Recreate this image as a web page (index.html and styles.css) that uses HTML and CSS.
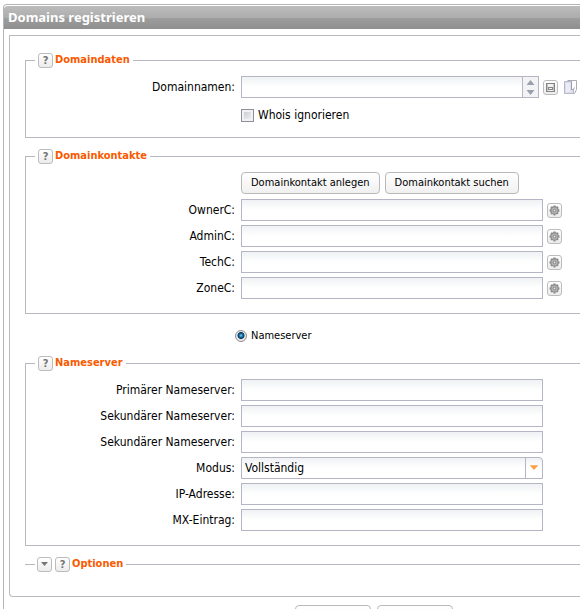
FILE: index.html
```html
<!DOCTYPE html>
<html lang="de">
<head>
<meta charset="utf-8">
<title>Domains registrieren</title>
<link rel="stylesheet" href="styles.css">
</head>
<body>
<svg class="defs" aria-hidden="true">
  <symbol id="gear" viewBox="0 0 10 10">
    <path d="M4 .5h2l.3 1 1.500-.4 1 1.400-.5 1.100 1.200.6v1.600l-1.200.5.4 1.300-1.300 1.100-1.200-.5L5.800 9.500H4.200l-.5-1.300-1.300.5L1.200 7.500l.5-1.200-1.200-.5V4.200l1.200-.5-.5-1.300 1.200-1.200 1.300.5z" fill="#8c8c8c"/>
    <circle cx="5" cy="5" r="2.8" fill="#b4b4b4"/>
    <circle cx="5" cy="5" r="1.6" fill="#858585"/>
    <circle cx="5" cy="5" r="0.9" fill="#e2e2e2"/>
  </symbol>
</svg>
<form class="window">
  <h1 class="title">Domains registrieren</h1>
  <div class="panel">
    <fieldset class="group data">
      <legend><button type="button" class="icon help">?</button><span>Domaindaten</span></legend>
      <div class="row">
        <label for="names">Domainnamen:</label>
        <div class="names">
          <textarea id="names" rows="1"></textarea>
          <span class="spin"><svg width="15" height="20" viewBox="0 0 15 20"><path d="M7.500 3l4 5h-8zM7.500 18l4-5h-8z" fill="#9ba1ac"/></svg></span>
        </div>
        <button type="button" class="icon" aria-label="Speichern"><svg width="9" height="9" viewBox="0 0 9 9"><path d="M0 0h9v9H0z" fill="#858585"/><path d="M1 1h1v7H1zM7 1h1v7H7z" fill="#c4c4c4"/><path d="M2 1h5v3H2zM3 5h3v1H3zM2 7h5v1H2z" fill="#f1f1f1"/></svg></button>
        <button type="button" class="plain" aria-label="Kopieren"><svg width="13" height="15" viewBox="0 0 13 15"><path d="M3.500.5h9v9l-2 4h-2" fill="#fff" stroke="#a9abb5"/><path d="M.5 1.500h7v8h2v4h-9z" fill="#dedfec" stroke="#b5b7c8"/><path d="M7.500 1.500v8h2l1-2" fill="none" stroke="#9b9dac"/><path d="M2 3h4v9H2z" fill="#ececf6"/></svg></button>
      </div>
      <div class="row check">
        <input type="checkbox" id="whois"><label for="whois">Whois ignorieren</label>
      </div>
    </fieldset>

    <fieldset class="group">
      <legend><button type="button" class="icon help">?</button><span>Domainkontakte</span></legend>
      <div class="row actions">
        <button type="button" class="button">Domainkontakt anlegen</button>
        <button type="button" class="button">Domainkontakt suchen</button>
      </div>
      <div class="row"><label for="owner">OwnerC:</label><input type="text" id="owner"><button type="button" class="icon" aria-label="OwnerC bearbeiten"><svg width="11" height="11"><use href="#gear"/></svg></button></div>
      <div class="row"><label for="admin">AdminC:</label><input type="text" id="admin"><button type="button" class="icon" aria-label="AdminC bearbeiten"><svg width="11" height="11"><use href="#gear"/></svg></button></div>
      <div class="row"><label for="tech">TechC:</label><input type="text" id="tech"><button type="button" class="icon" aria-label="TechC bearbeiten"><svg width="11" height="11"><use href="#gear"/></svg></button></div>
      <div class="row"><label for="zone">ZoneC:</label><input type="text" id="zone"><button type="button" class="icon" aria-label="ZoneC bearbeiten"><svg width="11" height="11"><use href="#gear"/></svg></button></div>
    </fieldset>

    <div class="choice"><input type="radio" id="ns" name="mode" checked><label for="ns">Nameserver</label></div>

    <fieldset class="group">
      <legend><button type="button" class="icon help">?</button><span>Nameserver</span></legend>
      <div class="row"><label for="ns1">Primärer Nameserver:</label><input type="text" id="ns1"></div>
      <div class="row"><label for="ns2">Sekundärer Nameserver:</label><input type="text" id="ns2"></div>
      <div class="row"><label for="ns3">Sekundärer Nameserver:</label><input type="text" id="ns3"></div>
      <div class="row"><label for="modus">Modus:</label>
        <div class="select"><select id="modus"><option>Vollständig</option></select><svg class="arrow" width="18" height="22" viewBox="0 0 18 22"><path d="M4 8h9l-4.500 5z" fill="#f9a040"/></svg></div></div>
      <div class="row"><label for="ip">IP-Adresse:</label><input type="text" id="ip"></div>
      <div class="row"><label for="mx">MX-Eintrag:</label><input type="text" id="mx"></div>
    </fieldset>

    <fieldset class="group closed">
      <legend><button type="button" class="icon" aria-label="Optionen aufklappen"><svg width="7" height="4" viewBox="0 0 7 4"><path d="M0 0h7L3.500 4z" fill="#777"/></svg></button><button type="button" class="icon help">?</button><span>Optionen</span></legend>
    </fieldset>
  </div>
  <div class="footer">
    <button type="button" class="button" aria-label="Speichern"></button>
    <button type="button" class="button" aria-label="Abbrechen"></button>
  </div>
</form>
</body>
</html>
```
FILE: styles.css
```css
* { box-sizing: border-box; }

body {
  margin: 0;
  padding: 4px 0 0 3px;
  height: 100vh;
  overflow: hidden;
  background: #fff;
  color: #000;
  font: 12px/16px "DejaVu Sans Condensed", "DejaVu Sans", sans-serif;
  font-stretch: condensed;
}

input, textarea, select, button { margin: 0; font: inherit; color: inherit; }

.defs { display: none; }

.window {
  border: 1px solid #b4b4b8;
  border-width: 1px 0 0 1px;
  border-top-left-radius: 4px;
}

.title {
  margin: 0;
  height: 24px;
  padding-left: 4px;
  border-top: 1px solid #fff;
  border-top-left-radius: 4px;
  background: linear-gradient(#bcbcbc, #adadad 50%, #9c9c9c 55%, #8f8f8f);
  color: #fff;
  font: bold 13px/22px "Noto Sans", sans-serif;
}

.panel {
  margin: 6px 0 8px 5px;
  padding: 16px 0 24px 15px;
  border: 1px solid #b9b9c0;
  border-right: 0;
  border-bottom-left-radius: 4px;
}

.group {
  margin: 0 0 10px;
  padding: 8px 0 14px;
  border: 1px solid #b5b7c1;
  border-right: 0;
}

.group.data { padding-bottom: 11px; }
.group.closed { margin: 0; padding: 0; border-width: 1px 0 0; }

legend {
  display: flex;
  align-items: center;
  gap: 2px;
  height: 16px;
  margin-left: 9px;
  padding: 0 3px;
  color: #f85a00;
  font-size: 11px;
  font-weight: bold;
}

.closed legend { margin-left: 10px; padding-left: 2px; }
.closed .help { margin-left: 1px; }

.row { display: flex; align-items: center; min-height: 22px; }
.row + .row { margin-top: 4px; }

.row > label:first-child {
  width: 209px;
  margin-right: 6px;
  text-align: right;
}

input[type="text"], textarea, select {
  display: block;
  width: 302px;
  height: 22px;
  padding: 0 3px;
  border: 1px solid #b5b5c5;
  border-radius: 0;
  background: linear-gradient(#eff1f4, #fff 10px);
  outline: 0;
}

textarea { width: 281px; border-right: 0; resize: none; overflow: hidden; }

.names { display: flex; }

.spin {
  display: flex;
  width: 17px;
  height: 22px;
  border: 1px solid #b5b5c5;
  background: #f3f3f6;
}

.icon {
  display: flex;
  flex: none;
  align-items: center;
  justify-content: center;
  width: 15px;
  height: 15px;
  padding: 0;
  border: 1px solid #bcbcbc;
  border-radius: 3px;
  background: linear-gradient(#fff, #ececec);
}

.icon svg { flex: none; }
.icon use { width: 11px; height: 11px; }

.help { color: #757575; font-size: 11px; font-weight: bold; line-height: 13px; }
.row .icon { margin-left: 4px; }
.plain { display: flex; margin-left: 6px; padding: 0; border: 0; background: none; }

.row.check { margin-top: 6px; padding-left: 215px; }

input[type="checkbox"] {
  appearance: none;
  width: 13px;
  height: 13px;
  margin-right: 4px;
  border: 1px solid #8e8f96;
  background: linear-gradient(135deg, #c3c6cc, #f7f7f8);
  box-shadow: inset 0 0 0 2px #f2f2f3;
}

.row.actions { gap: 5px; padding-left: 215px; }
.actions + .row { margin-top: 5px; }

.button {
  height: 22px;
  padding: 0 9px;
  border: 1px solid #b9b9b9;
  border-radius: 4px;
  background: linear-gradient(#fff, #f0f0f0);
  font-size: 11px;
}

.choice {
  display: flex;
  align-items: center;
  gap: 4px;
  height: 24px;
  margin-bottom: 7px;
  padding-left: 210px;
  font-size: 11px;
}

input[type="radio"] {
  appearance: none;
  width: 12px;
  height: 12px;
  border: 1px solid #8c8e92;
  border-radius: 50%;
  background: radial-gradient(circle at 50% 45%, #7fd0f5 0, #1d7cb4 20%, #0b3354 42%, #e8e8e8 52%);
}

.select { position: relative; }
select { appearance: none; border-top-right-radius: 4px; }

.arrow {
  position: absolute;
  top: 0;
  right: 0;
  border-left: 1px solid #b5b5c5;
  pointer-events: none;
}

.footer { display: flex; gap: 6px; padding-left: 291px; }
.footer .button { width: 76px; flex: none; }
```
